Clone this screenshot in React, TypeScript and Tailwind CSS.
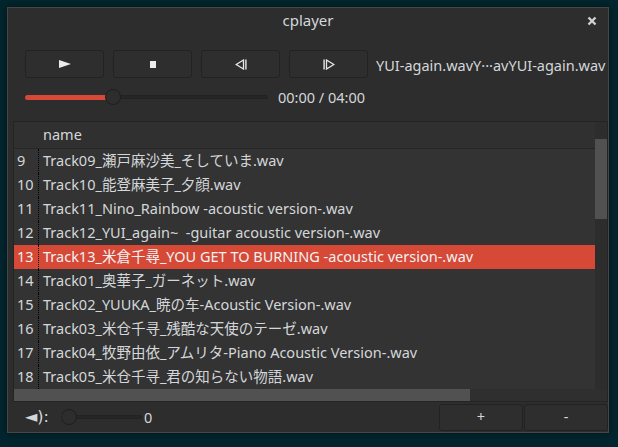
import React from "react";

const rows: [string, string][] = [
  ["9", "Track09_瀬戸麻沙美_そしていま.wav"],
  ["10", "Track10_能登麻美子_夕顔.wav"],
  ["11", "Track11_Nino_Rainbow -acoustic version-.wav"],
  ["12", "Track12_YUI_again~  -guitar acoustic version-.wav"],
  ["13", "Track13_米倉千尋_YOU GET TO BURNING -acoustic version-.wav"],
  ["14", "Track01_奥華子_ガーネット.wav"],
  ["15", "Track02_YUUKA_暁の车-Acoustic Version-.wav"],
  ["16", "Track03_米仓千寻_残酷な天使のテーゼ.wav"],
  ["17", "Track04_牧野由依_アムリタ-Piano Acoustic Version-.wav"],
  ["18", "Track05_米仓千寻_君の知らない物語.wav"],
];

function Btn({ children, w }: { children: React.ReactNode; w: string }) {
  return (
    <div
      className={`${w} h-[28px] flex items-center justify-center border border-[#222222] rounded-[3px] bg-[#2e2e2e]`}
    >
      {children}
    </div>
  );
}

export default function App() {
  return (
    <div className="w-[618px] h-[447px] bg-[#03252e] pt-[7px] pl-[7px] font-['Noto_Sans','Noto_Sans_CJK_JP',sans-serif] text-[14.5px] text-[#d4d7da]">
      <div className="w-[602px] h-[426px] bg-[#2d2d2d] border border-[#474747] flex flex-col shadow-[0_0_6px_rgba(0,0,0,0.5)]">
        {/* title bar */}
        <div className="h-[24px] relative flex items-center justify-center shrink-0">
          <span className="leading-none text-[15px]">cplayer</span>
          <div className="absolute right-[11px] top-[8px]">
            <svg width="10" height="10" viewBox="0 0 10 10">
              <path d="M1.5 1.5 L8.5 8.5 M8.5 1.5 L1.5 8.5" stroke="#d0d0d0" strokeWidth="2.4" />
            </svg>
          </div>
        </div>

        {/* controls */}
        <div className="flex items-center pl-[17px] mt-[18px] shrink-0">
          <div className="flex gap-[9px]">
            <Btn w="w-[79px]">
              <svg width="12" height="8" viewBox="0 0 12 8">
                <polygon points="0,0 12,4 0,8" fill="#ececec" />
              </svg>
            </Btn>
            <Btn w="w-[79px]">
              <svg width="6" height="7" viewBox="0 0 6 7">
                <rect x="0" y="0" width="6" height="7" fill="#ececec" />
              </svg>
            </Btn>
            <Btn w="w-[79px]">
              <svg width="12" height="11" viewBox="0 0 12 11">
                <polygon points="8.5,1 1.2,5.5 8.5,10" fill="none" stroke="#e6e6e6" strokeWidth="1.3" />
                <rect x="10.2" y="0.5" width="1.4" height="10" fill="#e6e6e6" />
              </svg>
            </Btn>
            <Btn w="w-[79px]">
              <svg width="12" height="11" viewBox="0 0 12 11">
                <rect x="0.4" y="0.5" width="1.4" height="10" fill="#e6e6e6" />
                <polygon points="3.5,1 10.8,5.5 3.5,10" fill="none" stroke="#e6e6e6" strokeWidth="1.3" />
              </svg>
            </Btn>
          </div>
          <span className="ml-[8px] whitespace-nowrap leading-none pt-[3px]">YUI-again.wavY···avYUI-again.wav</span>
        </div>

        {/* progress slider */}
        <div className="flex items-center pl-[17px] mt-[11px] h-[16px] shrink-0">
          <div className="relative w-[243px] h-[16px] flex items-center">
            <div className="w-full h-[4px] rounded-full bg-[#262626] border border-[#222]" />
            <div className="absolute left-0 top-[6px] w-[84px] h-[4.5px] rounded-full bg-[#d64937]" />
            <div className="absolute left-[80px] top-0 w-[16px] h-[16px] rounded-full bg-[#2d2d2d] border border-[#1e1e1e]" />
          </div>
          <span className="ml-[10px] leading-none">00:00 / 04:00</span>
        </div>

        {/* table */}
        <div className="ml-[5px] mt-[16px] w-[595px] h-[281px] border border-[#242424] flex flex-col shrink-0">
          <div className="flex h-[267px]">
            <div className="w-[581px] flex flex-col overflow-hidden bg-[#333333]">
              <div className="h-[27px] flex border-b border-[#262626] bg-[#303030] shrink-0">
                <div className="w-[25px]" />
                <div className="pl-[4px] flex items-center">name</div>
              </div>
              {rows.map(([n, t]) => {
                const sel = n === "13";
                return (
                  <div
                    key={n}
                    className={`h-[24px] flex shrink-0 ${sel ? "bg-[#d64937] text-[#f2f2f2]" : ""}`}
                  >
                    <div className="w-[25px] pl-[3px] flex items-center border-r border-dotted border-black">
                      {n}
                    </div>
                    <div className="pl-[4px] flex items-center whitespace-pre">{t}</div>
                  </div>
                );
              })}
            </div>
            <div className="w-[12px] bg-[#2d2d2d] relative">
              <div className="absolute left-0 top-[17px] w-[12px] h-[80px] bg-[#515151]" />
            </div>
          </div>
          <div className="h-[12px] flex bg-[#2f2f2f]">
            <div className="w-[456px] bg-[#515151]" />
          </div>
        </div>

        {/* bottom bar */}
        <div className="flex-1 flex items-center pl-[17px]">
          <span className="font-['DejaVu_Sans',sans-serif] text-[16px] leading-none">◄):</span>
          <div className="relative ml-[12px] w-[81px] h-[16px] flex items-center">
            <div className="w-full h-[4px] rounded-full bg-[#262626] border border-[#222]" />
            <div className="absolute left-0 top-[6px] w-[2px] h-[4px] bg-[#d64937]" />
            <div className="absolute left-[0px] top-0 w-[16px] h-[16px] rounded-full bg-[#2d2d2d] border border-[#1e1e1e]" />
          </div>
          <span className="ml-[2px] leading-none">0</span>
          <div className="ml-auto flex gap-[1px]">
            <div className="w-[84px] h-[27px] flex items-center justify-center border border-[#222222] rounded-[3px] bg-[#2e2e2e]">+</div>
            <div className="w-[84px] h-[27px] flex items-center justify-center border border-[#222222] rounded-[3px] bg-[#2e2e2e]">-</div>
          </div>
        </div>
      </div>
    </div>
  );
}
